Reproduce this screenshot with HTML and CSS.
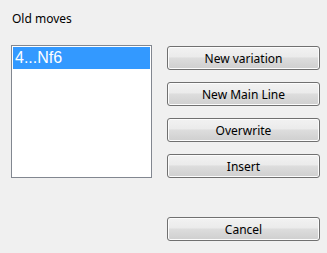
FILE: index.html
```html
<!DOCTYPE html>
<html>
<head>
	<title>Old moves</title>
	<link rel="stylesheet" href="styles.css">
</head>
<body>
  <div class="dialog">
    <div class="leftCol">
      <div class="caption">Old moves</div>
      <div class="moveList">
        <div class="moveItem selected">4...Nf6</div>
      </div>
    </div>

    <div class="rightCol">
      <button class="btn">New variation</button>
      <button class="btn">New Main Line</button>
      <button class="btn">Overwrite</button>
      <button class="btn">Insert</button>
      <button class="btn cancel">Cancel</button>
    </div>
  </div>
</body>
</html>
```

FILE: styles.css
```css
html, body{
	margin:0;
	padding:0;
	background:#f0f0f0;
}

.dialog{
	display:flex;
	width:327px;
	height:253px;
	font-family:"Noto Sans", "Open Sans", sans-serif;
	font-size:12px;
	color:#000;
}

	.leftCol{
		padding-left:11px;
		padding-top:11px;
		width:141px;
	}

		.caption{
			padding-left:1px;
			height:34px;
			line-height:16px;
		}

		.moveList{
			box-sizing:border-box;
			width:141px;
			height:133px;
			border:1px solid #828790;
			background:#fff;
			padding:1px;
		}

			.moveItem{
				height:22px;
				line-height:22px;
				padding-left:2px;
				font-family:"Liberation Sans", Arial, sans-serif;
				font-size:16px;
			}

			.selected{
				background:#3399ff;
				color:#fff;
			}

	.rightCol{
		display:flex;
		flex-direction:column;
		gap:12px;
		padding-top:46px;
		margin-left:15px;
	}

		.btn{
			box-sizing:border-box;
			width:153px;
			height:24px;
			border:1px solid #707070;
			border-radius:3px;
			padding:0;
			font-family:"Noto Sans", "Open Sans", sans-serif;
			font-size:12px;
			color:#000;
			background:linear-gradient(#f2f2f2 0%, #ebebeb 45%, #dddddd 50%, #cfcfcf 100%);
			box-shadow:inset 0 0 0 1px #fcfcfc;
		}

		.cancel{
			margin-top:27px;
		}
```
